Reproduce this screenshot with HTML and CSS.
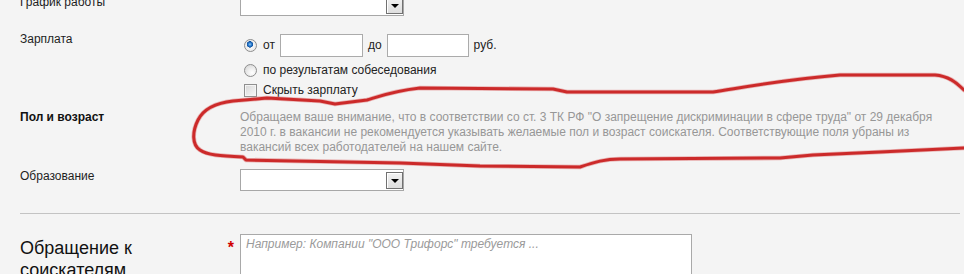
FILE: index.html
```html
<!DOCTYPE html>
<html lang="ru">
<head>
<meta charset="utf-8">
<title>Вакансия</title>
<link rel="stylesheet" href="styles.css">
</head>
<body>
<div class="form">
  <div class="row row-schedule">
    <div class="label label-pad">График работы</div>
    <div class="field">
      <div class="select"><span class="select-btn"><span class="arrow"></span></span></div>
    </div>
  </div>

  <div class="row row-salary">
    <div class="label">Зарплата</div>
    <div class="field field-salary">
      <div class="opt opt-range">
        <input class="radio" type="radio" name="sal" checked>
        <span>от</span>
        <input class="num" type="text">
        <span>до</span>
        <input class="num num2" type="text">
        <span>руб.</span>
      </div>
      <div class="opt opt-b">
        <input class="radio" type="radio" name="sal">
        <span>по результатам собеседования</span>
      </div>
      <div class="opt opt-c">
        <input class="check" type="checkbox">
        <span>Скрыть зарплату</span>
      </div>
    </div>
  </div>

  <div class="row row-gender">
    <div class="label label-bold">Пол и возраст</div>
    <div class="field notice">Обращаем ваше внимание, что в соответствии со ст. 3 ТК РФ "О запрещение дискриминации в сфере труда" от 29 декабря 2010 г. в вакансии не рекомендуется указывать желаемые пол и возраст соискателя. Соответствующие поля убраны из вакансий всех работодателей на нашем сайте.</div>
  </div>

  <div class="row row-edu">
    <div class="label">Образование</div>
    <div class="field">
      <div class="select"><span class="select-btn"><span class="arrow"></span></span></div>
    </div>
  </div>

  <div class="divider"></div>

  <div class="row row-appeal">
    <div class="label label-big">
      <span class="big-title">Обращение к соискателям</span>
      <span class="req">*</span>
    </div>
    <div class="field">
      <textarea class="area" placeholder="Например: Компании &quot;ООО Трифорс&quot; требуется ..."></textarea>
    </div>
  </div>
</div>

<svg class="scribble" width="964" height="274" viewBox="0 0 964 274" aria-hidden="true">
  <path d="M 964,90 C 956,82 948,76 935,75 L 840,75 C 780,80 740,88 713,92 L 567,92 L 553,89 L 420,88 C 393,91 380,96 367,100 L 335,104 L 320,101 L 267,98 L 233,101 C 215,103 203,110 198,120 C 192,132 192,145 200,150 C 207,155 220,156 243,157 L 246,160 L 400,163 L 480,166 L 580,167 C 595,162 605,159 620,159 L 780,158 L 813,155 L 880,152 L 964,148" fill="none" stroke="#e08080" stroke-width="4.6" stroke-linecap="round" stroke-linejoin="round" opacity="0.55"/>
  <path d="M 964,90 C 956,82 948,76 935,75 L 840,75 C 780,80 740,88 713,92 L 567,92 L 553,89 L 420,88 C 393,91 380,96 367,100 L 335,104 L 320,101 L 267,98 L 233,101 C 215,103 203,110 198,120 C 192,132 192,145 200,150 C 207,155 220,156 243,157 L 246,160 L 400,163 L 480,166 L 580,167 C 595,162 605,159 620,159 L 780,158 L 813,155 L 880,152 L 964,148" fill="none" stroke="#cc2a2a" stroke-width="3" stroke-linecap="round" stroke-linejoin="round"/>
</svg>
</body>
</html>
```

FILE: styles.css
```css
html, body {
  margin: 0;
  padding: 0;
}

body {
  background: #f4f4f4;
  font: 12px/15px "Liberation Sans", Arial, sans-serif;
  color: #222;
  width: 964px;
  height: 274px;
  overflow: hidden;
  position: relative;
}

.form {
  margin-top: -6px;
  padding: 0 4px 0 20px;
}

.row {
  display: flex;
  align-items: flex-start;
}

.label {
  width: 220px;
  flex: none;
  color: #1e1e1e;
}

.label-pad {
  padding-top: 1px;
}

.label-bold {
  font-weight: bold;
  color: #111;
}

.field {
  flex: none;
}

/* select imitation */
.select {
  box-sizing: border-box;
  width: 164px;
  height: 22px;
  border: 1px solid #a7a7a7;
  background: #fff;
  display: flex;
  justify-content: flex-end;
  align-items: center;
}

.select-btn {
  box-sizing: border-box;
  width: 17px;
  height: 17px;
  border: 1px solid #717171;
  background: linear-gradient(#f2f2f2, #dedede);
  box-shadow: inset 1px 1px 0 #fff;
  display: flex;
  align-items: center;
  justify-content: center;
}

.arrow {
  width: 0;
  height: 0;
  border-left: 4px solid transparent;
  border-right: 4px solid transparent;
  border-top: 4px solid #000;
  margin-top: 1px;
}

/* salary */
.row-salary {
  margin-top: 16px;
}

.field-salary {
  padding-top: 2px;
}

.opt {
  display: flex;
  align-items: center;
  color: #222;
}

.opt-range {
  height: 23px;
}

.opt-b {
  height: 16px;
  margin-top: 5px;
}

.opt-c {
  height: 16px;
  margin-top: 4px;
}

.radio {
  appearance: none;
  -webkit-appearance: none;
  box-sizing: border-box;
  width: 13px;
  height: 13px;
  margin: 0 6px 0 4px;
  border: 1px solid #8d8d8d;
  border-radius: 50%;
  background: radial-gradient(circle at 65% 70%, #ffffff 0, #ececec 45%, #cfcfcf 100%);
}

.radio:checked {
  background:
    radial-gradient(circle at 45% 40%, #8fc8f2 0, #2f7fd0 1.6px, #0c4e9c 3px, transparent 3.4px),
    radial-gradient(circle, #ffffff 0, #e2e2e2 100%);
}

.check {
  appearance: none;
  -webkit-appearance: none;
  box-sizing: border-box;
  width: 13px;
  height: 13px;
  margin: 0 6px 0 4px;
  border: 1px solid #8f8f8f;
  background: linear-gradient(135deg, #d6d6d6, #f8f8f8);
  box-shadow: inset 0 0 0 1px #f4f4f4;
}

.num {
  box-sizing: border-box;
  width: 83px;
  height: 23px;
  margin: 0 5px;
  border: 1px solid #ababab;
  background: #fff;
  padding: 0 3px;
  font: inherit;
}

.num2 {
  width: 82px;
}

/* gender notice */
.row-gender {
  margin-top: 12px;
}

.notice {
  width: 715px;
  color: #979797;
}

/* education */
.row-edu {
  margin-top: 14px;
}

.divider {
  margin-top: 22px;
  border-top: 1px solid #c3c3c3;
}

/* appeal */
.row-appeal {
  margin-top: 20px;
}

.label-big {
  display: flex;
  justify-content: space-between;
  align-items: flex-start;
  padding-top: 3px;
  font-size: 18px;
  line-height: 22px;
  color: #111;
}

.big-title {
  width: 170px;
}

.req {
  color: #d00000;
  font-size: 16px;
  line-height: 16px;
  font-weight: bold;
  margin-right: 6px;
  margin-top: 3px;
}

.area {
  box-sizing: border-box;
  display: block;
  width: 452px;
  height: 80px;
  margin: 0;
  border: 1px solid #a9a9a9;
  background: #fff;
  padding: 2px 5px;
  font: 12px/15px "Liberation Sans", Arial, sans-serif;
  resize: none;
}

.area::placeholder {
  color: #9a9a9a;
  font-style: italic;
}

.scribble {
  position: absolute;
  left: 0;
  top: 0;
  pointer-events: none;
}
```
